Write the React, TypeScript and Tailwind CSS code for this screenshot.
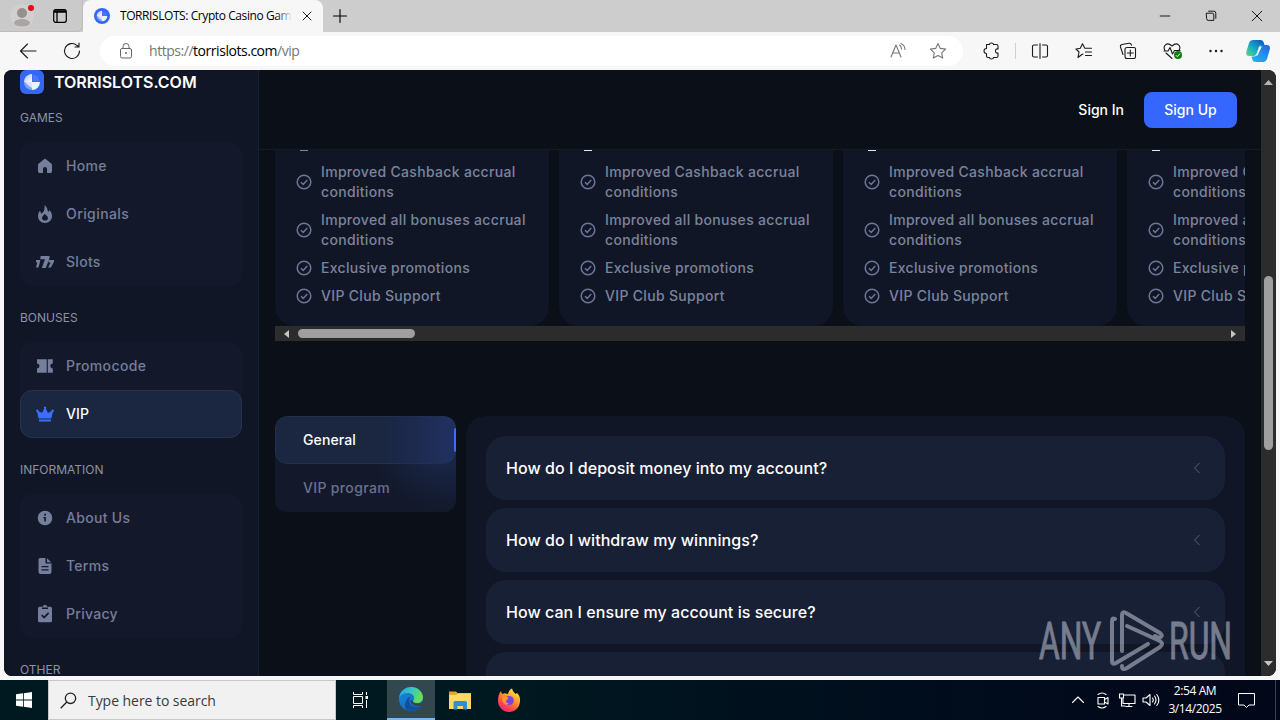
import React from 'react';
import clsx from 'clsx';

const INTER = "font-['Inter','Liberation_Sans',sans-serif]";
const SEGOE = "font-['Open_Sans','Noto_Sans',sans-serif]";

interface MenuItem {
  label: string;
  icon: React.ReactNode;
  tracking: string;
  active?: boolean;
}

interface MenuGroup {
  title: string;
  items: MenuItem[];
}

const Fill: React.FC<{ d: string }> = ({ d }) => (
  <svg width="18" height="18" viewBox="0 0 18 18" fill="currentColor" fillRule="evenodd">
    <path d={d} />
  </svg>
);

interface LineProps {
  d: string;
  size?: number;
  className?: string;
}

// Thin outline icons, drawn on a 20px grid
const Line: React.FC<LineProps> = ({ d, size = 20, className }) => (
  <svg
    width={size}
    height={size}
    viewBox="0 0 20 20"
    fill="none"
    stroke="currentColor"
    strokeWidth="1.1"
    strokeLinecap="round"
    strokeLinejoin="round"
    className={clsx('shrink-0', className)}
  >
    <path d={d} />
  </svg>
);

const menu: MenuGroup[] = [
  {
    title: 'GAMES',
    items: [
      {
        label: 'Home',
        tracking: 'tracking-[0.3px]',
        icon: <Fill d="M9 1.500 2.500 6.700Q2 7.100 2 8v6.600Q2 16 3.400 16H7v-4.300Q7 10 9 10t2 1.700V16h3.600Q16 16 16 14.600V8q0-.9-.5-1.300Z" />,
      },
      {
        label: 'Originals',
        tracking: 'tracking-[0.42px]',
        icon: <Fill d="M8.300 0C11.300 2 11.300 4.500 12.200 7.200L13.300 5C15.300 7 16 9 16 11c0 4-3 7-7 7s-7-3-7-7c0-2 .8-3.800 2-5.200L5.300 8.800C8 7 9.300 3.500 8.300 0ZM8.600 8.800C8 10.500 6 11.200 6 12.900 6 14.500 7.300 15.600 9 15.600s3-1.100 3-2.700C12 11.200 9.800 10.500 8.600 8.800Z" />,
      },
      {
        label: 'Slots',
        tracking: 'tracking-[0.3px]',
        icon: <Fill d="M4.700 3h9l-.4 2.800L9.800 15H5.800L9 6.300H4.200ZM0 7h4.300L3.900 9.200 2.400 14.500H0L1.300 9.300H-.4ZM13 7h5.200l-.4 2.200-2.900 5.300h-2.800l2.600-5.100h-2.300Z" />,
      },
    ],
  },
  {
    title: 'BONUSES',
    items: [
      {
        label: 'Promocode',
        tracking: 'tracking-[0.4px]',
        icon: <Fill d="M1 2.300H10.700v13.400H1V11.500a2.500 2.500 0 0 0 0-5ZM11.800 2.300h5v4.200a2.500 2.500 0 0 0 0 5v4.200h-5Z" />,
      },
      {
        label: 'VIP',
        active: true,
        tracking: 'tracking-[0.1px]',
        icon: <Fill d="M9 1.500a1.300 1.300 0 0 1 .8 2.300L12 8l3.600-2.100a1.200 1.200 0 1 1 1.400.9L15.300 13.500H2.700L1 6.800a1.200 1.200 0 1 1 1.400-.9L6 8l2.200-4.200A1.300 1.300 0 0 1 9 1.500ZM3 14.600h12v1.800H3Z" />,
      },
    ],
  },
  {
    title: 'INFORMATION',
    items: [
      {
        label: 'About Us',
        tracking: 'tracking-[0.3px]',
        icon: <Fill d="M9 1.700a7.300 7.300 0 1 0 0 14.600A7.300 7.300 0 0 0 9 1.700ZM8.200 4.800h1.800v1.800H8.200ZM7.400 8h2.500v4.600H8.300V9.300h-.9Z" />,
      },
      {
        label: 'Terms',
        tracking: 'tracking-[0.3px]',
        icon: <Fill d="M4 1h5.500v5.500h6V15Q15.500 17 13.500 17h-9Q2.500 17 2.500 15V2.500Q2.500 1 4 1ZM11 1.300 15.200 5.300H11ZM5.500 9v1.300h7V9ZM5.500 12.200v1.300h7v-1.300Z" />,
      },
      {
        label: 'Privacy',
        tracking: 'tracking-[0.3px]',
        icon: <Fill d="M7 1.800a2 2 0 0 1 4 0h3.500q1.500 0 1.500 1.500v12.500q0 1.500-1.500 1.500h-11Q2 17.300 2 15.800v-12.500q0-1.500 1.500-1.500ZM6 2.500v1.500h6V2.500ZM12 7.300 8.200 11.200 6.300 9.400 5.100 10.700 8.200 13.700 13.200 8.600Z" />,
      },
    ],
  },
];

const perks = [
  'Improved Cashback accrual conditions',
  'Improved all bonuses accrual conditions',
  'Exclusive promotions',
  'VIP Club Support',
];

const questions = [
  'How do I deposit money into my account?',
  'How do I withdraw my winnings?',
  'How can I ensure my account is secure?',
  '',
];

const BrandMark: React.FC<{ size: number; round?: boolean }> = ({ size, round }) => (
  <svg width={size} height={size} viewBox="0 0 24 24" className="shrink-0">
    <defs>
      <linearGradient id="lobe" x1="0" y1="0" x2="1" y2="1">
        <stop stopColor="#a9bcfb" />
        <stop offset="1" stopColor="#fff" />
      </linearGradient>
    </defs>
    <rect width="24" height="24" rx={round ? 12 : 6} fill="#3567f5" />
    <path d="M12 4A8 8 0 0 0 4 12H12Z" fill="url(#lobe)" />
    <path d="M12 20A8 8 0 0 0 20 12H12Z" fill="#eef2ff" />
    <path d="M4 12A8 8 0 0 0 12 20V12Z" fill="#86a3fa" />
    <path d="M5 12H12V18Q8 15.500 5 12Z" fill="#dbe4ff" />
    <path d="M12.500 4.500A8 8 0 0 1 19.500 11.500H12.500Z" fill="#4b76f7" />
  </svg>
);

const TabStrip: React.FC = () => (
  <div className={clsx('flex h-8 shrink-0 bg-[#cdcdcd] text-black', SEGOE)}>
    <div className="flex w-[83px] items-center rounded-br-md border-r border-b border-[#bdbdbd] bg-[#cacaca]">
      <svg width="24" height="24" viewBox="0 0 24 24" className="ml-[10px]">
        <circle cx="12" cy="12" r="12" fill="#d2d0ce" />
        <circle cx="12" cy="9" r="5" fill="#96918e" />
        <ellipse cx="12" cy="18.800" rx="8" ry="3.700" fill="#aaa5a2" />
        <circle cx="21" cy="4" r="3" fill="#e30b17" />
      </svg>
      <svg width="14" height="14" viewBox="0 0 14 14" className="ml-[19px]" fill="none" stroke="#000">
        <rect x=".7" y=".7" width="12.600" height="12.600" rx="2" strokeWidth="1.200" />
        <path d="M1 2.500H13" strokeWidth="2.500" />
        <path d="M4 2.500V13" strokeWidth="1.300" />
      </svg>
    </div>
    <div className="flex w-[240px] items-center rounded-t-lg bg-[#f7f7f7] pl-[11px]">
      <BrandMark size={16} round />
      <div className="relative ml-[10px] w-[172px] overflow-hidden whitespace-nowrap text-[12px] leading-4 tracking-[-0.42px]">
        TORRISLOTS: Crypto Casino Gam
        <div className="absolute inset-y-0 right-0 w-4 bg-gradient-to-r from-transparent to-[#f7f7f7]" />
      </div>
      <Line size={16} className="ml-[7px]" d="M5 5 15 15M15 5 5 15" />
    </div>
    <div className="flex items-center pl-[7px]">
      <Line d="M10 3.500V16.500M3.500 10H16.500" />
    </div>
    <div className="ml-auto flex items-center">
      <div className="flex w-[46px] justify-center"><Line size={16} d="M4 10H16" /></div>
      <div className="flex w-[46px] justify-center"><Line size={16} d="M4.500 6.500h7q2 0 2 2v7h-7q-2 0-2-2ZM7 4h6.500Q16 4 16 6.500V13" /></div>
      <div className="flex w-[46px] justify-center"><Line size={16} d="M4 4 16 16M16 4 4 16" /></div>
    </div>
  </div>
);

const ToolButton: React.FC<{ children: React.ReactNode }> = ({ children }) => (
  <div className="flex w-11 shrink-0 justify-center">{children}</div>
);

const Toolbar: React.FC = () => (
  <div className={clsx('flex h-[38px] shrink-0 items-center bg-[#f7f7f7] pl-[6px] text-[#1b1b1b]', SEGOE)}>
    <ToolButton><Line d="M18 10H2.500M9.500 3 2.500 10 9.500 17" /></ToolButton>
    <ToolButton><Line d="M17.500 10a7.500 7.500 0 1 1-2.600-5.700L17 6M17 2V6H13" /></ToolButton>
    <div className="ml-[6px] flex h-[30px] w-[863px] items-center rounded-full bg-white pl-[16px] text-[#767676]">
      <svg width="20" height="20" viewBox="0 0 20 20" fill="none" stroke="#666">
        <rect x="4.500" y="7.500" width="11" height="9.500" rx="1.500" />
        <path d="M7 7.500V5.500a3 3 0 0 1 6 0v2" />
        <circle cx="10" cy="12" r=".6" fill="#666" />
      </svg>
      <div className="ml-[13px] w-[720px] whitespace-nowrap text-[14px] leading-5 tracking-[-0.46px]">
        https://<span className="text-black">torrislots.com</span>/vip
      </div>
      <div className="ml-[19px] flex w-5 items-center">
        <Line d="M3 16 8 4 13 16M5 12H11M11.500 4Q13.500 5.500 13.500 8M13 2.500Q17 4.500 17 8.500" />
      </div>
      <Line className="ml-[20px]" d="m10 2.500 2.300 4.900 5.300.7-3.900 3.700 1 5.300L10 14.500l-4.700 2.600 1-5.300L2.400 8.100l5.300-.7Z" />
    </div>
    <div className="ml-[6px] flex w-[44px] shrink-0 justify-center">
      <Line d="M5.500 3.500H8.500Q8.500 2 10.500 2t2 1.500H15.500Q17 3.500 17 5V8Q14.500 7.500 14.500 10T17 12V15Q17 16.500 15.500 16.500H12.500Q12.500 18 10.500 18t-2-1.500H7Q5.500 16.500 5.500 15V12.500Q3 12.500 3 10T5.500 7.500Z" />
    </div>
    <div className="flex w-[5px] shrink-0 justify-center"><div className="h-4 w-px bg-[#cfcfcf]" /></div>
    <ToolButton><Line d="M7.500 4H4Q2.500 4 2.500 5.500V14.500Q2.500 16 4 16H7.500M12.500 4H16Q17.500 4 17.500 5.500V14.500Q17.500 16 16 16H12.500M10 2.500V17.500" /></ToolButton>
    <ToolButton><Line d="M7.500 13.800 4 16.500 5 11 2 8 6.300 7.200 8.500 2.800 10.800 7.200H17.500M11.500 11H17.500M11.500 14.500H17.500M7.500 13.800 9 13" /></ToolButton>
    <ToolButton><Line d="M9 6.500H16Q17.500 6.500 17.500 8V15.500Q17.500 17.500 16 17.500H9Q7 17.500 7 15.500V8.500Q7 6.500 9 6.500ZM12.300 9V15M9.300 12H15.300M5 13.500 2.500 6Q2 4 4 3.500L11 2.300Q13 2 13.500 4.200" /></ToolButton>
    <ToolButton>
      <div className="relative h-5 w-5">
        <Line d="M3 9.500Q1 6 3.500 3.800T10 5Q14 1.500 16.500 3.800T17 9.500M2 10H6L8 6.500 10.500 13 12.500 9.500H18M4 12 10 17.500" />
        <svg width="8" height="8" viewBox="0 0 8 8" className="absolute right-0 bottom-0.5">
          <circle cx="4" cy="4" r="4" fill="#107c10" />
          <path d="m2 4.300 1.300 1.300L6 2.700" stroke="#fff" fill="none" />
        </svg>
      </div>
    </ToolButton>
    <ToolButton>
      <svg width="14" height="4" viewBox="0 0 14 4" fill="#1b1b1b">
        <circle cx="1.500" cy="2" r="1.200" /><circle cx="7" cy="2" r="1.200" /><circle cx="12.500" cy="2" r="1.200" />
      </svg>
    </ToolButton>
    <div className="flex w-[40px] shrink-0 justify-center">
      <svg width="24" height="24" viewBox="0 0 24 24">
        <defs>
          <linearGradient id="cp1" x1="0" y1="1" x2="1" y2="0"><stop stopColor="#5fdc74" /><stop offset=".45" stopColor="#17a7c8" /><stop offset="1" stopColor="#0a4fb4" /></linearGradient>
          <linearGradient id="cp2" x1="0" y1="1" x2="1" y2="0"><stop stopColor="#19b9f0" /><stop offset=".5" stopColor="#2494f2" /><stop offset="1" stopColor="#1f62d2" /></linearGradient>
        </defs>
        <path d="M7 1h8q2 0 2.700 2.500l.8 2.500h-3q-2 0-2.700 2L10.500 15q-.7 2-2.500 2H3Q0 17 .2 13.500L3 4Q4.200 1 7 1Z" fill="url(#cp1)" />
        <path d="M17 23H9.500Q7 23 6.300 20.500L5.500 17.500H8q2.300 0 3-2.500l2-7q.7-2 2.500-2H21q3 0 3 3.500L21 20q-1.200 3-4 3Z" fill="url(#cp2)" />
        <path d="M13.300 7.500H15.800L11.500 16.500H8.500Q10.500 16 11.200 14Z" fill="#f7f7f7" />
      </svg>
    </div>
  </div>
);

const Sidebar: React.FC = () => (
  <aside className="h-full w-[255px] shrink-0 overflow-hidden border-r border-[#171f30] bg-[#111626] px-4">
    <div className="flex h-6 items-center">
      <BrandMark size={24} />
      <span className="ml-[10px] whitespace-nowrap text-[16px] font-semibold text-white">TORRISLOTS.COM</span>
    </div>
    {menu.map((group) => (
      <section key={group.title} className="pt-[15px] pb-2">
        <h3 className="mb-[15px] text-[12px] leading-[18px] text-[#8b92a8]">{group.title}</h3>
        <div className="w-[222px] rounded-xl bg-[#13192b]">
          {group.items.map((item) => (
            <div
              key={item.label}
              className={clsx(
                'flex h-12 items-center rounded-xl px-4 text-[14px] leading-5 font-medium',
                item.active
                  ? 'border border-[#263452] bg-[#1b2640] pl-[15px] text-white'
                  : 'text-[#757e9a]',
              )}
            >
              <span className={clsx(item.active && 'text-[#3b6dff]')}>{item.icon}</span>
              <span className={clsx('ml-3', item.tracking)}>{item.label}</span>
            </div>
          ))}
        </div>
      </section>
    ))}
    <h3 className="mt-[15px] text-[12px] leading-[18px] text-[#8b92a8]">OTHER</h3>
  </aside>
);

const VipCard: React.FC<{ dim: boolean }> = ({ dim }) => (
  <div className="relative w-[274px] shrink-0 rounded-b-[20px] bg-[#111626] px-5 pt-[12px] pb-5">
    <div className={clsx('absolute top-0 left-[25px] h-px w-2', dim ? 'bg-[#7b849c]' : 'bg-[#dbe4ff]')} />
    <ul className="flex flex-col gap-2">
      {perks.map((perk) => (
        <li key={perk} className="flex items-center text-[14px] font-medium leading-5 tracking-[0.32px] text-[#7b849c]">
          <svg width="18" height="18" viewBox="0 0 18 18" fill="none" stroke="#6d7696" strokeWidth="1.500" className="shrink-0">
            <circle cx="9" cy="9" r="6.800" />
            <path d="m6 9.200 2.200 2.200 4-4.300" />
          </svg>
          <span className="ml-2 w-[210px]">{perk}</span>
        </li>
      ))}
    </ul>
  </div>
);

const Faq: React.FC = () => (
  <div className="mt-[75px] flex items-start gap-[10px]">
    <div className="relative w-[181px] shrink-0 overflow-hidden rounded-xl bg-[#13192b] text-[14px] leading-5 font-medium">
      <div className="absolute -top-9 -right-16 h-[130px] w-[150px] bg-[radial-gradient(closest-side,#25407f70,transparent)]" />
      <div className="relative flex h-12 items-center rounded-xl border border-[#22304f] bg-[linear-gradient(90deg,#1b2641_60%,#203061)] pl-[27px] tracking-[0.1px] text-white">
        General
        <div className="absolute top-[11px] -right-px h-6 w-[2px] rounded-l bg-[#3b6dff]" />
      </div>
      <div className="relative flex h-12 items-center pl-7 tracking-[0.35px] text-[#68728b]">VIP program</div>
    </div>
    <div className="flex w-[779px] flex-col gap-2 rounded-t-[20px] bg-[#111626] p-5">
      {questions.map((question, i) => (
        <div key={i} className="flex h-16 shrink-0 items-center justify-between rounded-[20px] bg-[#182036] px-5 text-[16px] font-medium tracking-[0.05px] text-white">
          {question}
          {question && (
            <svg width="16" height="16" viewBox="0 0 16 16" fill="none" stroke="#566079">
              <path d="M10.500 3 5.500 8l5 5" />
            </svg>
          )}
        </div>
      ))}
    </div>
  </div>
);

const Site: React.FC = () => (
  <div className={clsx('mx-1 flex h-[606px] shrink-0 overflow-hidden rounded-lg bg-[#0b0f17]', INTER)}>
    <Sidebar />
    <main className="h-full w-[1002px] shrink-0 overflow-hidden">
      <header className="flex h-20 items-center justify-end border-b border-[#141a26] pr-6 text-[14px] font-medium text-white">
        <span>Sign In</span>
        <span className="ml-5 flex h-9 w-[93px] items-center justify-center rounded-lg bg-[#3567ff]">Sign Up</span>
      </header>
      <div className="px-4">
        <div className="flex h-44 w-[970px] gap-[10px] overflow-hidden">
          {[0, 1, 2, 3].map((n) => (
            <VipCard key={n} dim={n === 0} />
          ))}
        </div>
        <div className="flex h-[15px] w-[970px] items-center bg-[#2c2c2c] px-[9px]">
          <svg width="5" height="8" viewBox="0 0 5 8" fill="#c4c4c4"><path d="M5 0V8L0 4Z" /></svg>
          <div className="ml-[9px] h-[9px] w-[117px] rounded-full bg-[#9f9f9f]" />
          <svg width="5" height="8" viewBox="0 0 5 8" fill="#c4c4c4" className="ml-auto"><path d="M0 0V8L5 4Z" /></svg>
        </div>
        <Faq />
      </div>
    </main>
    <div className="flex w-[15px] shrink-0 flex-col items-center bg-[#2c2c2c] py-[10px]">
      <svg width="9" height="5" viewBox="0 0 9 5" fill="#b4b4b4"><path d="M0 5H9L4.500 0Z" /></svg>
      <div className="mt-[191px] h-[174px] w-[9px] rounded-full bg-[#9f9f9f]" />
      <svg width="9" height="5" viewBox="0 0 9 5" fill="#c4c4c4" className="mt-auto"><path d="M0 0H9L4.500 5Z" /></svg>
    </div>
  </div>
);

const Watermark: React.FC = () => (
  <svg
    width="200"
    height="66"
    viewBox="0 0 200 66"
    className="absolute top-[608px] left-[1035px] font-['Roboto',sans-serif] text-[52px] opacity-50"
    fill="#d5dae5"
  >
    <g stroke="#d5dae5" strokeWidth="1">
      <text x="4" y="51" textLength="62" lengthAdjust="spacingAndGlyphs">ANY</text>
      <text x="134" y="51" textLength="63" lengthAdjust="spacingAndGlyphs">RUN</text>
    </g>
    <g fill="none" stroke="#d5dae5" strokeWidth="4" strokeLinecap="round" strokeLinejoin="round">
      <path d="M80 11Q77 9 77 14V53Q77 57 81 55L113 36" />
      <path d="M87 43V7Q87 3 91 5L125 25Q129 28 124 30L120 28" />
      <path d="M92 18 125 33Q129 36 125 39L92 60Q87 63 87 58" />
    </g>
  </svg>
);

const Taskbar: React.FC = () => (
  <footer className={clsx('mt-1 flex h-10 shrink-0 items-center bg-[linear-gradient(90deg,#001820_40%,#000d1c_70%,#020719)] text-white', SEGOE)}>
    <div className="flex w-12 justify-center">
      <svg width="16" height="16" viewBox="0 0 16 16" fill="#fff">
        <path d="M0 2.300 7 1.300V7.600H0ZM7.800 1.200 16 0V7.600H7.800ZM0 8.400H7V14.700L0 13.700ZM7.800 8.400H16V16L7.800 14.800Z" />
      </svg>
    </div>
    <div className="flex h-10 w-[288px] items-center border border-[#c8c8c8] bg-[#f1f1f1] pl-[11px] text-[#3a3a3a]">
      <svg width="17" height="17" viewBox="0 0 17 17" fill="none" stroke="#222" strokeWidth="1.300">
        <circle cx="10.500" cy="6.300" r="5.200" />
        <path d="M6.800 10 .7 16.300" />
      </svg>
      <span className="ml-[11px] whitespace-nowrap text-[14px] tracking-[-0.05px]">Type here to search</span>
    </div>
    <div className="flex w-[51px] justify-center pr-[3px]">
      <svg width="17" height="16" viewBox="0 0 17 16" fill="none" stroke="#fff">
        <path d="M1.500 0V2.500H10.500V0M1.500 16V13.500H10.500V16M1.500 4.500H10.500V11.500H1.500ZM14.500 0V3M14.500 8V16" />
        <path d="M13.500 5.500H16" strokeWidth="3" />
      </svg>
    </div>
    <div className="flex h-10 w-12 items-center justify-center border-b-2 border-[#76b9ed] bg-[#33474f]">
      <svg width="24" height="24" viewBox="0 0 24 24">
        <defs>
          <linearGradient id="edgeTop" x1="0" y1="0" x2="1" y2=".4"><stop stopColor="#229fdc" /><stop offset=".5" stopColor="#36c5c9" /><stop offset="1" stopColor="#67df58" /></linearGradient>
          <linearGradient id="edgeLow" x1="0" y1="0" x2="1" y2="1"><stop stopColor="#1688d8" /><stop offset="1" stopColor="#1268c2" /></linearGradient>
        </defs>
        <circle cx="12" cy="12" r="12" fill="url(#edgeLow)" />
        <path d="M.2 10.500C1 4.500 6 0 12 0c7 0 12 5 12 10.500 0 3.500-2.800 5.500-6 5.500-3 0-4-1-4-1.700 0-.8 1.200-1.300 1.200-3.300C15.200 8.500 12.500 6 8.800 6 4.500 6 1.500 8 .2 10.500Z" fill="url(#edgeTop)" />
        <path d="M8 23C4 20 6 12 11.500 9.500 9 13 10 20 17 20c2 0 3.500-.5 5-1.500C19 23.500 13 25 8 23Z" fill="#124f9f" />
        <path d="M24 13C23.500 16 21 16.800 18 16.500 15 16.500 13.500 15.500 14 14 12.500 13 11.300 12.500 11.500 14.500 12 18 17 20.500 22.500 18.300L24 19Z" fill="#33474f" />
      </svg>
    </div>
    <div className="flex w-[49px] justify-center">
      <svg width="22" height="19" viewBox="0 0 22 19">
        <path d="M0 .5H7L8.500 2H22V18H0Z" fill="#e8a728" />
        <path d="M0 4H7L9 2.500H22V18H0Z" fill="#ffd869" />
        <path d="M4.500 18.500V11.500Q4.500 10 6 10H16.500Q18 10 18 11.500V18.500H14V15H8.500V18.500Z" fill="#2f8fd6" />
      </svg>
    </div>
    <div className="flex w-[49px] justify-center">
      <svg width="24" height="24" viewBox="0 0 24 24">
        <defs>
          <linearGradient id="fox" x1=".8" y1="0" x2=".2" y2="1"><stop stopColor="#fff04a" /><stop offset=".4" stopColor="#ff9a26" /><stop offset=".7" stopColor="#ff4b4b" /><stop offset="1" stopColor="#e61f7d" /></linearGradient>
        </defs>
        <path d="M4 3Q4 5 5.500 6 7 5 9 5.500L11 6Q12 1.500 15 .5 15.500 3.500 18.500 6L20 5Q23.500 8 23 13.500C22.500 20 17.500 24 12 24S1 19.500 1 13C1 9 2 5.500 4 3Z" fill="url(#fox)" />
        <circle cx="12.200" cy="12.500" r="4.600" fill="#7845dc" />
        <path d="M5 9Q8 7.500 11 9.500 12 11 9.500 12 8 15 12 15.500 9 18 6.500 15 4.500 12 5 9Z" fill="#ff9430" />
      </svg>
    </div>
    <div className="ml-auto flex items-center">
      <Line size={20} className="mr-[5px]" d="M4.500 12.500 10 7 15.500 12.500" />
      <Line size={20} className="mr-[4px]" d="M5 7.500H11.500V14H5ZM11.500 9.500 15 7.500V14L11.500 12M5 4.500Q9 1.500 13 4.500M5 16.500Q9 19.500 13 16.500" />
      <Line size={20} className="mr-[4px]" d="M7 5H18V13.500H6V9M2.500 4H6.500V8H2.500ZM4.500 8V16H8M12 13.500V16.500M9 16.500H15" />
      <Line size={20} d="M2 8H5L9 4.500V15.500L5 12H2ZM11.500 8Q13 10 11.500 12M13.500 6Q16.500 10 13.500 14M15.800 4.500Q20 10 15.800 15.500" />
      <div className="flex h-10 w-[68px] flex-col items-center justify-center text-[12px] leading-[18px] tracking-[-0.4px]">
        <span>2:54 AM</span>
        <span>3/14/2025</span>
      </div>
      <div className="flex w-[46px] justify-center">
        <svg width="17" height="17" viewBox="0 0 17 17" fill="none" stroke="#fff" className="-ml-[11px]">
          <path d="M.5 1.500H16.500V13H11L8.500 15.500 6 13H.5Z" />
        </svg>
      </div>
      <div className="h-10 w-[5px] border-l border-[#3a4250]" />
    </div>
  </footer>
);

const App: React.FC = () => (
  <div className="relative flex h-[720px] w-[1280px] flex-col overflow-hidden bg-[#f7f7f7]">
    <TabStrip />
    <Toolbar />
    <Site />
    <Taskbar />
    <Watermark />
  </div>
);

export default App;
